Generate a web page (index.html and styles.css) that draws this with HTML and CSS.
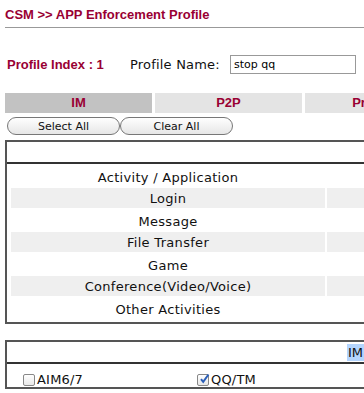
FILE: index.html
```html
<!DOCTYPE html>
<html lang="en">
<head>
    <meta charset="UTF-8">
    <title>CSM - APP Enforcement Profile</title>
    <link rel="stylesheet" href="styles.css">
</head>
<body>
<div class="page">
    <!-- title -->
    <h1 class="title">CSM &gt;&gt; APP Enforcement Profile</h1>

    <!-- profile info -->
    <div class="profile-row">
        <span class="profile-index">Profile Index : 1</span>
        <label class="profile-name">Profile Name:</label>
        <input class="name-input" type="text" value="stop qq">
    </div>

    <!-- category tabs -->
    <div class="tabs">
        <div class="tab active">IM</div>
        <div class="tab">P2P</div>
        <div class="tab">Protocol</div>
        <div class="tab">Misc</div>
    </div>

    <div class="buttons">
        <button class="pill">Select All</button>
        <button class="pill">Clear All</button>
    </div>

    <!-- activity table -->
    <div class="box">
        <div class="box-head"></div>
        <div class="box-body">
            <div class="row"><span class="cell">Activity / Application</span><span class="cell side"></span></div>
            <div class="row shade"><span class="cell">Login</span><span class="cell side"></span></div>
            <div class="row"><span class="cell">Message</span><span class="cell side"></span></div>
            <div class="row shade"><span class="cell">File Transfer</span><span class="cell side"></span></div>
            <div class="row"><span class="cell">Game</span><span class="cell side"></span></div>
            <div class="row shade"><span class="cell">Conference(Video/Voice)</span><span class="cell side"></span></div>
            <div class="row"><span class="cell">Other Activities</span><span class="cell side"></span></div>
        </div>
    </div>

    <!-- application list -->
    <div class="box apps">
        <div class="box-head apps-head"><span class="sel">IM</span></div>
        <div class="app-list">
            <label class="app"><span class="check"></span>AIM6/7</label>
            <label class="app"><span class="check on"><svg viewBox="0 0 12 12" width="12" height="12"><path d="M3 6.2 L5.2 8.8 L10.5 1.5" fill="none" stroke="#2b5fb8" stroke-width="2"/></svg></span>QQ/TM</label>
        </div>
    </div>
</div>
</body>
</html>
```

FILE: styles.css
```css
body {
    margin: 0;
    padding: 0;
    background-color: #fff;
    overflow: hidden;
    font-family: "DejaVu Sans", Verdana, sans-serif;
    color: #111;
}
.page {
    width: 720px;
    padding: 0 0 0 5px;
}
.title {
    margin: 0;
    padding: 7px 0 0 0;
    height: 20px;
    font-family: "Liberation Sans", Arial, sans-serif;
    font-size: 13px;
    font-weight: bold;
    color: #990033;
    border-bottom: 1px solid #999;
}
.profile-row {
    display: flex;
    align-items: center;
    margin-top: 26px;
    height: 20px;
}
.profile-index {
    width: 123px;
    padding-left: 2px;
    font-family: "Liberation Sans", Arial, sans-serif;
    font-size: 13px;
    font-weight: bold;
    color: #990033;
}
.profile-name {
    font-size: 13px;
    letter-spacing: 0.2px;
    width: 100px;
}
.name-input {
    width: 118px;
    height: 15px;
    margin: 0;
    padding: 1px 3px;
    border: 1px solid #999;
    font-family: "DejaVu Sans", Verdana, sans-serif;
    font-size: 11px;
}
.tabs {
    display: flex;
    gap: 3px;
    margin-top: 19px;
}
.tab {
    width: 147px;
    flex: none;
    height: 20px;
    line-height: 20px;
    text-align: center;
    background-color: #e4e4e4;
    font-family: "Liberation Sans", Arial, sans-serif;
    font-size: 13px;
    font-weight: bold;
    color: #990033;
}
.tab.active {
    background-color: #c2c2c2;
}
.buttons {
    display: flex;
    margin: 4px 0 0 2px;
}
.pill {
    width: 113px;
    height: 18px;
    margin: 0;
    padding: 0;
    border: 1px solid #777;
    border-radius: 9px;
    background: linear-gradient(#fefefe, #e6e6e6);
    font-family: "DejaVu Sans", Verdana, sans-serif;
    font-size: 11px;
    color: #111;
}
.box {
    margin-top: 5px;
    border: 2px solid #555;
}
.box-head {
    height: 20px;
    border-bottom: 2px solid #333;
}
.box-body {
    padding: 2px 4px 2px 4px;
}
.row {
    display: flex;
    gap: 2px;
    height: 22px;
}
.cell {
    width: 314px;
    flex: none;
    display: flex;
    align-items: center;
    justify-content: center;
    font-size: 13px;
    letter-spacing: 0.3px;
    padding-top: 1px;
    box-sizing: border-box;
}
.cell.side {
    width: 300px;
}
.row.shade .cell {
    background-color: #efefef;
    height: 20px;
}
.apps {
    margin-top: 16px;
}
.apps-head {
    display: flex;
    justify-content: flex-start;
    padding-left: 340px;
    align-items: center;
}
.sel {
    background-color: #b4d5fe;
    font-size: 13px;
    line-height: 17px;
    padding: 0 1px;
}
.app-list {
    display: flex;
    padding: 8px 0 0 16px;
}
.app {
    display: flex;
    align-items: center;
    gap: 2px;
    width: 174px;
    font-size: 13px;
    letter-spacing: 0.2px;
}
.check {
    display: inline-block;
    width: 10px;
    height: 10px;
    border: 1px solid #888;
    border-radius: 2px;
    background: linear-gradient(#fff, #e8e8e8);
    position: relative;
}
.check svg {
    position: absolute;
    left: 0;
    top: -2px;
}
```
